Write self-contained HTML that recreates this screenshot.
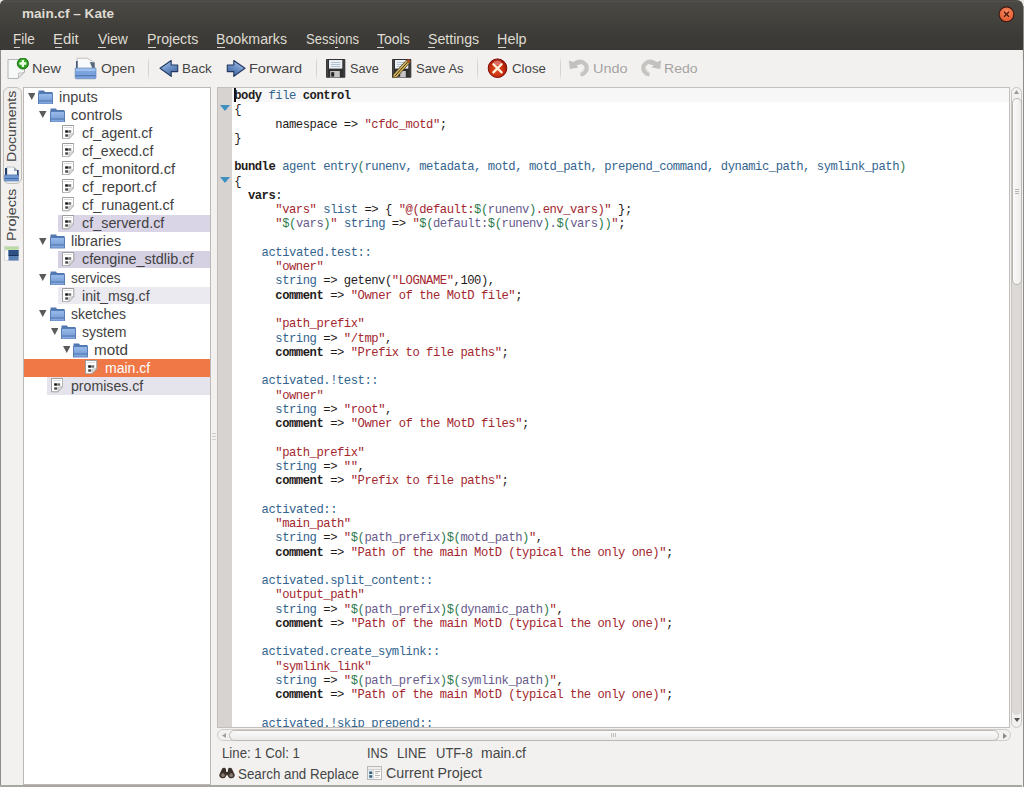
<!DOCTYPE html>
<html><head><meta charset="utf-8"><style>
*{margin:0;padding:0;box-sizing:border-box}
html,body{width:1024px;height:787px;overflow:hidden;background:#f2f1f0;font-family:"Liberation Sans",sans-serif}
.a{position:absolute}
.tx{position:absolute;white-space:nowrap;transform-origin:0 0;line-height:14px}
#code{font-family:"Liberation Mono",monospace;white-space:pre}
.k{font-weight:bold}
.d{color:#33648f}
.s{color:#a3262e}
.o{color:#2d7a4c}
.f{color:#675a8c}
</style></head><body>
<div class="a" style="left:0;top:0;width:1024px;height:60px;background:#e9e6df"></div>
<div class="a" style="left:0;top:0;width:1023px;height:50px;background:linear-gradient(#4a4945 0px,#45443f 14px,#3c3b37 36px,#3a3935 50px);border-radius:5px 6px 0 0"></div>
<div class="a" style="left:3px;top:1px;width:1016px;height:1px;background:#52514c"></div>
<div class="a" style="left:1023px;top:6px;width:1px;height:781px;background:#8f8d8a"></div>
<div class="a" style="left:0;top:50px;width:1022px;height:37px;background:#f2f1f0"></div>
<div class="a" style="left:0;top:50px;width:1px;height:737px;background:#8e8c88"></div>
<div class="a" style="left:147.5px;top:56px;width:1px;height:25px;background:linear-gradient(rgba(0,0,0,0),#d6d3cf 30%,#d6d3cf 70%,rgba(0,0,0,0))"></div>
<div class="a" style="left:315.5px;top:56px;width:1px;height:25px;background:linear-gradient(rgba(0,0,0,0),#d6d3cf 30%,#d6d3cf 70%,rgba(0,0,0,0))"></div>
<div class="a" style="left:477px;top:56px;width:1px;height:25px;background:linear-gradient(rgba(0,0,0,0),#d6d3cf 30%,#d6d3cf 70%,rgba(0,0,0,0))"></div>
<div class="a" style="left:559.5px;top:56px;width:1px;height:25px;background:linear-gradient(rgba(0,0,0,0),#d6d3cf 30%,#d6d3cf 70%,rgba(0,0,0,0))"></div>
<svg class="a" style="left:7px;top:58px" width="24" height="22" viewBox="0 0 24 22"><path d="M1 1.5 H17.5 V14 L11 20.5 H1z" fill="#f7f8f8" stroke="#b4b4b4" stroke-width="1"/><path d="M17.5 14 L11 20.5 Q12 16 11.5 15 Q15 15.5 17.5 14z" fill="#e8e8e8" stroke="#b4b4b4" stroke-width="0.8"/><circle cx="15.9" cy="5.5" r="5.6" fill="#2f9a22" stroke="#1c6e14" stroke-width="0.9"/><circle cx="15.9" cy="4.5" r="3.5" fill="#55c040" opacity="0.5"/><path d="M15.9 2 V9 M12.4 5.5 H19.4" stroke="#e8ffe0" stroke-width="2.3"/></svg>
<svg class="a" style="left:74px;top:57px" width="24" height="23" viewBox="0 0 24 23"><path d="M3.2 1.2 H13 L20.4 5.4 V12 H3.2z" fill="#f8f9fa" stroke="#b3b3b3" stroke-width="0.8"/><path d="M15.8 5 L20.6 5.4 V11.5 L18.5 11.5z" fill="#56657d"/><rect x="2.2" y="4" width="1.3" height="7.5" fill="#1d3560"/><path d="M1.2 11 H22 V20.6 Q22 21.8 20.8 21.8 H2.4 Q1.2 21.8 1.2 20.6z" fill="#7aa2dc" stroke="#5a7cb0" stroke-width="0.6"/><rect x="1.8" y="11.5" width="19.6" height="2.6" fill="#a0c0ee"/><rect x="1.5" y="18.2" width="20.2" height="1" fill="#4a70a8"/></svg>
<svg class="a" style="left:159px;top:59px" width="20" height="19" viewBox="0 0 20 19"><defs><linearGradient id="ag" x1="0.2" y1="0" x2="0.8" y2="1"><stop offset="0" stop-color="#b4cdec"/><stop offset="0.45" stop-color="#6f95cb"/><stop offset="1" stop-color="#3d5f95"/></linearGradient></defs><path d="M1 9.3 L12.2 1.5 V6 H18.7 V12.6 H12.2 V17.4z" fill="url(#ag)" stroke="#22385e" stroke-width="1.1" stroke-linejoin="round"/></svg>
<svg class="a" style="left:226px;top:59px;transform:scaleX(-1)" width="20" height="19" viewBox="0 0 20 19"><defs><linearGradient id="ag2" x1="0.2" y1="0" x2="0.8" y2="1"><stop offset="0" stop-color="#b4cdec"/><stop offset="0.45" stop-color="#6f95cb"/><stop offset="1" stop-color="#3d5f95"/></linearGradient></defs><path d="M1 9.3 L12.2 1.5 V6 H18.7 V12.6 H12.2 V17.4z" fill="url(#ag2)" stroke="#22385e" stroke-width="1.1" stroke-linejoin="round"/></svg>
<svg class="a" style="left:326px;top:59px" width="19.5" height="19" viewBox="0 0 19.5 19"><rect x="0" y="0" width="19.3" height="18.8" rx="0.8" fill="#303030"/><rect x="0.6" y="0.6" width="1.2" height="17.6" fill="#4c4c4c"/><rect x="17.4" y="0.6" width="1.2" height="17.6" fill="#454545"/><rect x="3" y="1" width="13.3" height="8.6" fill="#eaeff5"/><rect x="5" y="3.1" width="9.3" height="0.8" fill="#a9b5c4"/><rect x="5" y="5.1" width="9.3" height="0.8" fill="#a9b5c4"/><rect x="5" y="7.1" width="9.3" height="0.8" fill="#a9b5c4"/><rect x="4.2" y="12" width="9.6" height="6.3" fill="#c4c4c4"/><rect x="5.2" y="13.2" width="3" height="4.4" fill="#242424"/></svg>
<svg class="a" style="left:392px;top:59px" width="20" height="19" viewBox="0 0 20 19"><rect x="0" y="0" width="19.3" height="18.8" rx="0.8" fill="#303030"/><rect x="0.6" y="0.6" width="1.2" height="17.6" fill="#4c4c4c"/><rect x="17.4" y="0.6" width="1.2" height="17.6" fill="#454545"/><rect x="3" y="1" width="13.3" height="8.6" fill="#eaeff5"/><rect x="5" y="3.1" width="9.3" height="0.8" fill="#a9b5c4"/><rect x="5" y="5.1" width="9.3" height="0.8" fill="#a9b5c4"/><rect x="5" y="7.1" width="9.3" height="0.8" fill="#a9b5c4"/><rect x="4.2" y="12" width="9.6" height="6.3" fill="#c4c4c4"/><rect x="5.2" y="13.2" width="3" height="4.4" fill="#242424"/><path d="M1.2 18.8 L0.9 16 L14.4 1.2 L17.6 4 L4.1 18.9z" fill="#d2b866" stroke="#3a2808" stroke-width="0.7"/><path d="M2.6 17.4 L16 2.6" stroke="#4a3208" stroke-width="1"/><path d="M14.4 1.2 L17.6 4 L18.6 2.9 Q18.8 0.8 16.6 0.2z" fill="#b04e28"/></svg>
<svg class="a" style="left:487px;top:58px" width="21" height="21" viewBox="0 0 21 21"><defs><radialGradient id="rg" cx="0.45" cy="0.6" r="0.6"><stop offset="0" stop-color="#e0501c"/><stop offset="0.6" stop-color="#c8300f"/><stop offset="1" stop-color="#9a1408"/></radialGradient></defs><circle cx="10.5" cy="10.2" r="9.3" fill="url(#rg)" stroke="#7e0e06" stroke-width="1"/><ellipse cx="10.5" cy="5" rx="4" ry="2.5" fill="#f0a0a0" opacity="0.55"/><path d="M6.4 6.2 L14.6 14.4 M14.6 6.2 L6.4 14.4" stroke="#fff5dc" stroke-width="2.3" stroke-linecap="round"/></svg>
<svg class="a" style="left:568px;top:57px" width="22" height="20" viewBox="0 0 22 20"><path d="M7.5 6.2 Q11 3.5 15 5.5 Q19.5 8 18.5 12.5 Q17.5 16.5 12.5 17.5" stroke="#c6c4c1" stroke-width="4.2" fill="none"/><path d="M0.8 3.5 L1.8 12 L10.5 10.5 L8.5 8.5 Q10 7.5 12 8 L11 3.5 Q8 3 5.5 5z" fill="#c3c1be"/><path d="M12.5 15.5 Q15.5 14 15.5 11.5" stroke="#e4e3e1" stroke-width="1.2" fill="none"/></svg>
<svg class="a" style="left:640px;top:57px;transform:scaleX(-1)" width="22" height="20" viewBox="0 0 22 20"><path d="M7.5 6.2 Q11 3.5 15 5.5 Q19.5 8 18.5 12.5 Q17.5 16.5 12.5 17.5" stroke="#c6c4c1" stroke-width="4.2" fill="none"/><path d="M0.8 3.5 L1.8 12 L10.5 10.5 L8.5 8.5 Q10 7.5 12 8 L11 3.5 Q8 3 5.5 5z" fill="#c3c1be"/><path d="M12.5 15.5 Q15.5 14 15.5 11.5" stroke="#e4e3e1" stroke-width="1.2" fill="none"/></svg>
<div class="a" style="left:2.5px;top:87px;width:19.5px;height:97px;border:1px solid #c3c0bc;border-radius:6px;background:#f0efee"></div>
<div class="tx" style="left:5.3px;top:162.4px;font-size:13.3px;line-height:14px;color:#454545;transform-origin:0 0;transform:rotate(-90deg) scaleX(1.06)">Documents</div>
<div class="tx" style="left:5.3px;top:241.4px;font-size:13.3px;line-height:14px;color:#454545;transform-origin:0 0;transform:rotate(-90deg) scaleX(1.085)">Projects</div>
<svg class="a" style="left:4px;top:166px" width="15" height="15.5" viewBox="0 0 15 15.5"><path d="M3 1 H10 L14 5 V9 H3z" fill="#f4f8fb" stroke="#a9b0b8" stroke-width="0.7"/><path d="M10 1 V5 H14" fill="#9aa6b2" /><rect x="1" y="2" width="2" height="8" fill="#24406a"/><rect x="13" y="4" width="1.6" height="6" fill="#24406a"/><path d="M0.5 9 H14.5 V15 H0.5z" fill="#6f9ad3" stroke="#4a72a8" stroke-width="0.6"/><rect x="1" y="12" width="13" height="0.9" fill="#3d64a0"/></svg>
<svg class="a" style="left:4px;top:245.5px" width="15" height="15" viewBox="0 0 15 15"><rect x="0.5" y="0.5" width="14" height="14" fill="#f8f8f8" stroke="#c9c9c9" stroke-width="0.6"/><rect x="0.8" y="0.8" width="13.4" height="3" fill="#b8dba0"/><rect x="4.5" y="4" width="10" height="10.5" fill="#5b80b4"/><rect x="4.5" y="4" width="10" height="5" fill="#2d4f82"/><rect x="4.5" y="9" width="10" height="1" fill="#16325a"/></svg>
<div class="a" style="left:23px;top:87px;width:188px;height:698px;background:#fff;border:1px solid #bcb9b5"></div>
<div class="a" style="left:57.5px;top:214.50px;width:152.5px;height:17.3px;background:#d9d5e6"></div>
<div class="a" style="left:58px;top:250.70px;width:152px;height:17.3px;background:#d5d1e3"></div>
<div class="a" style="left:58px;top:286.90px;width:152px;height:17.3px;background:#eceaf1"></div>
<div class="a" style="left:24px;top:359.30px;width:186px;height:17.6px;background:#f07746"></div>
<div class="a" style="left:46.5px;top:377.40px;width:163.5px;height:17.3px;background:#e5e3ec"></div>
<svg class="a" style="left:27.7px;top:92.8px" width="7.5" height="7" viewBox="0 0 7.5 7"><path d="M0 0 H7.5 L3.75 7z" fill="#5b5b5b"/></svg>
<svg class="a" style="left:38px;top:89.6px" width="15" height="14.5" viewBox="0 0 15 14.5"><defs><linearGradient id="fg" x1="0" y1="0" x2="0" y2="1"><stop offset="0" stop-color="#9cbdec"/><stop offset="1" stop-color="#6a93cf"/></linearGradient></defs><path d="M0.5 0.6 H6 L7 2 H14.5 V14 H0.5z" fill="#5077b0"/><rect x="0.5" y="3.6" width="14" height="10.4" fill="url(#fg)" stroke="#5279b2" stroke-width="0.9"/><rect x="1" y="10.6" width="13" height="1.1" fill="#4d72aa"/><rect x="1" y="11.7" width="13" height="1.8" fill="#85a9de"/></svg>
<svg class="a" style="left:39.3px;top:110.9px" width="7.5" height="7" viewBox="0 0 7.5 7"><path d="M0 0 H7.5 L3.75 7z" fill="#5b5b5b"/></svg>
<svg class="a" style="left:49.6px;top:107.7px" width="15" height="14.5" viewBox="0 0 15 14.5"><defs><linearGradient id="fg" x1="0" y1="0" x2="0" y2="1"><stop offset="0" stop-color="#9cbdec"/><stop offset="1" stop-color="#6a93cf"/></linearGradient></defs><path d="M0.5 0.6 H6 L7 2 H14.5 V14 H0.5z" fill="#5077b0"/><rect x="0.5" y="3.6" width="14" height="10.4" fill="url(#fg)" stroke="#5279b2" stroke-width="0.9"/><rect x="1" y="10.6" width="13" height="1.1" fill="#4d72aa"/><rect x="1" y="11.7" width="13" height="1.8" fill="#85a9de"/></svg>
<svg class="a" style="left:61.9px;top:124.9px" width="12.5" height="14.3" viewBox="0 0 12.5 14.3"><path d="M0.5 0.5 H11.8 V8.5 L6.8 13.8 H0.5z" fill="#fff" stroke="#9c9c9c" stroke-width="1"/><path d="M11.8 8.5 L6.8 13.8 L7.5 9.2z" fill="#e4e4e4" stroke="#a5a5a5" stroke-width="0.6"/><rect x="2" y="2" width="8" height="0.7" fill="#cdcdcd"/><rect x="3.2" y="5.3" width="2.7" height="2.4" fill="#111"/><rect x="6.2" y="5.3" width="3" height="2.4" fill="#6a6a6a"/><rect x="3.2" y="9.3" width="3" height="2.4" fill="#4a4a4a"/></svg>
<svg class="a" style="left:61.9px;top:143px" width="12.5" height="14.3" viewBox="0 0 12.5 14.3"><path d="M0.5 0.5 H11.8 V8.5 L6.8 13.8 H0.5z" fill="#fff" stroke="#9c9c9c" stroke-width="1"/><path d="M11.8 8.5 L6.8 13.8 L7.5 9.2z" fill="#e4e4e4" stroke="#a5a5a5" stroke-width="0.6"/><rect x="2" y="2" width="8" height="0.7" fill="#cdcdcd"/><rect x="3.2" y="5.3" width="2.7" height="2.4" fill="#111"/><rect x="6.2" y="5.3" width="3" height="2.4" fill="#6a6a6a"/><rect x="3.2" y="9.3" width="3" height="2.4" fill="#4a4a4a"/></svg>
<svg class="a" style="left:61.9px;top:161.1px" width="12.5" height="14.3" viewBox="0 0 12.5 14.3"><path d="M0.5 0.5 H11.8 V8.5 L6.8 13.8 H0.5z" fill="#fff" stroke="#9c9c9c" stroke-width="1"/><path d="M11.8 8.5 L6.8 13.8 L7.5 9.2z" fill="#e4e4e4" stroke="#a5a5a5" stroke-width="0.6"/><rect x="2" y="2" width="8" height="0.7" fill="#cdcdcd"/><rect x="3.2" y="5.3" width="2.7" height="2.4" fill="#111"/><rect x="6.2" y="5.3" width="3" height="2.4" fill="#6a6a6a"/><rect x="3.2" y="9.3" width="3" height="2.4" fill="#4a4a4a"/></svg>
<svg class="a" style="left:61.9px;top:179.2px" width="12.5" height="14.3" viewBox="0 0 12.5 14.3"><path d="M0.5 0.5 H11.8 V8.5 L6.8 13.8 H0.5z" fill="#fff" stroke="#9c9c9c" stroke-width="1"/><path d="M11.8 8.5 L6.8 13.8 L7.5 9.2z" fill="#e4e4e4" stroke="#a5a5a5" stroke-width="0.6"/><rect x="2" y="2" width="8" height="0.7" fill="#cdcdcd"/><rect x="3.2" y="5.3" width="2.7" height="2.4" fill="#111"/><rect x="6.2" y="5.3" width="3" height="2.4" fill="#6a6a6a"/><rect x="3.2" y="9.3" width="3" height="2.4" fill="#4a4a4a"/></svg>
<svg class="a" style="left:61.9px;top:197.3px" width="12.5" height="14.3" viewBox="0 0 12.5 14.3"><path d="M0.5 0.5 H11.8 V8.5 L6.8 13.8 H0.5z" fill="#fff" stroke="#9c9c9c" stroke-width="1"/><path d="M11.8 8.5 L6.8 13.8 L7.5 9.2z" fill="#e4e4e4" stroke="#a5a5a5" stroke-width="0.6"/><rect x="2" y="2" width="8" height="0.7" fill="#cdcdcd"/><rect x="3.2" y="5.3" width="2.7" height="2.4" fill="#111"/><rect x="6.2" y="5.3" width="3" height="2.4" fill="#6a6a6a"/><rect x="3.2" y="9.3" width="3" height="2.4" fill="#4a4a4a"/></svg>
<svg class="a" style="left:61.9px;top:215.4px" width="12.5" height="14.3" viewBox="0 0 12.5 14.3"><path d="M0.5 0.5 H11.8 V8.5 L6.8 13.8 H0.5z" fill="#fff" stroke="#9c9c9c" stroke-width="1"/><path d="M11.8 8.5 L6.8 13.8 L7.5 9.2z" fill="#e4e4e4" stroke="#a5a5a5" stroke-width="0.6"/><rect x="2" y="2" width="8" height="0.7" fill="#cdcdcd"/><rect x="3.2" y="5.3" width="2.7" height="2.4" fill="#111"/><rect x="6.2" y="5.3" width="3" height="2.4" fill="#6a6a6a"/><rect x="3.2" y="9.3" width="3" height="2.4" fill="#4a4a4a"/></svg>
<svg class="a" style="left:39.3px;top:237.6px" width="7.5" height="7" viewBox="0 0 7.5 7"><path d="M0 0 H7.5 L3.75 7z" fill="#5b5b5b"/></svg>
<svg class="a" style="left:49.6px;top:234.4px" width="15" height="14.5" viewBox="0 0 15 14.5"><defs><linearGradient id="fg" x1="0" y1="0" x2="0" y2="1"><stop offset="0" stop-color="#9cbdec"/><stop offset="1" stop-color="#6a93cf"/></linearGradient></defs><path d="M0.5 0.6 H6 L7 2 H14.5 V14 H0.5z" fill="#5077b0"/><rect x="0.5" y="3.6" width="14" height="10.4" fill="url(#fg)" stroke="#5279b2" stroke-width="0.9"/><rect x="1" y="10.6" width="13" height="1.1" fill="#4d72aa"/><rect x="1" y="11.7" width="13" height="1.8" fill="#85a9de"/></svg>
<svg class="a" style="left:62.4px;top:251.6px" width="12.5" height="14.3" viewBox="0 0 12.5 14.3"><path d="M0.5 0.5 H11.8 V8.5 L6.8 13.8 H0.5z" fill="#fff" stroke="#9c9c9c" stroke-width="1"/><path d="M11.8 8.5 L6.8 13.8 L7.5 9.2z" fill="#e4e4e4" stroke="#a5a5a5" stroke-width="0.6"/><rect x="2" y="2" width="8" height="0.7" fill="#cdcdcd"/><rect x="3.2" y="5.3" width="2.7" height="2.4" fill="#111"/><rect x="6.2" y="5.3" width="3" height="2.4" fill="#6a6a6a"/><rect x="3.2" y="9.3" width="3" height="2.4" fill="#4a4a4a"/></svg>
<svg class="a" style="left:39.3px;top:273.8px" width="7.5" height="7" viewBox="0 0 7.5 7"><path d="M0 0 H7.5 L3.75 7z" fill="#5b5b5b"/></svg>
<svg class="a" style="left:49.6px;top:270.6px" width="15" height="14.5" viewBox="0 0 15 14.5"><defs><linearGradient id="fg" x1="0" y1="0" x2="0" y2="1"><stop offset="0" stop-color="#9cbdec"/><stop offset="1" stop-color="#6a93cf"/></linearGradient></defs><path d="M0.5 0.6 H6 L7 2 H14.5 V14 H0.5z" fill="#5077b0"/><rect x="0.5" y="3.6" width="14" height="10.4" fill="url(#fg)" stroke="#5279b2" stroke-width="0.9"/><rect x="1" y="10.6" width="13" height="1.1" fill="#4d72aa"/><rect x="1" y="11.7" width="13" height="1.8" fill="#85a9de"/></svg>
<svg class="a" style="left:62.4px;top:287.8px" width="12.5" height="14.3" viewBox="0 0 12.5 14.3"><path d="M0.5 0.5 H11.8 V8.5 L6.8 13.8 H0.5z" fill="#fff" stroke="#9c9c9c" stroke-width="1"/><path d="M11.8 8.5 L6.8 13.8 L7.5 9.2z" fill="#e4e4e4" stroke="#a5a5a5" stroke-width="0.6"/><rect x="2" y="2" width="8" height="0.7" fill="#cdcdcd"/><rect x="3.2" y="5.3" width="2.7" height="2.4" fill="#111"/><rect x="6.2" y="5.3" width="3" height="2.4" fill="#6a6a6a"/><rect x="3.2" y="9.3" width="3" height="2.4" fill="#4a4a4a"/></svg>
<svg class="a" style="left:39.3px;top:310px" width="7.5" height="7" viewBox="0 0 7.5 7"><path d="M0 0 H7.5 L3.75 7z" fill="#5b5b5b"/></svg>
<svg class="a" style="left:49.6px;top:306.8px" width="15" height="14.5" viewBox="0 0 15 14.5"><defs><linearGradient id="fg" x1="0" y1="0" x2="0" y2="1"><stop offset="0" stop-color="#9cbdec"/><stop offset="1" stop-color="#6a93cf"/></linearGradient></defs><path d="M0.5 0.6 H6 L7 2 H14.5 V14 H0.5z" fill="#5077b0"/><rect x="0.5" y="3.6" width="14" height="10.4" fill="url(#fg)" stroke="#5279b2" stroke-width="0.9"/><rect x="1" y="10.6" width="13" height="1.1" fill="#4d72aa"/><rect x="1" y="11.7" width="13" height="1.8" fill="#85a9de"/></svg>
<svg class="a" style="left:50.9px;top:328.1px" width="7.5" height="7" viewBox="0 0 7.5 7"><path d="M0 0 H7.5 L3.75 7z" fill="#5b5b5b"/></svg>
<svg class="a" style="left:61.2px;top:324.9px" width="15" height="14.5" viewBox="0 0 15 14.5"><defs><linearGradient id="fg" x1="0" y1="0" x2="0" y2="1"><stop offset="0" stop-color="#9cbdec"/><stop offset="1" stop-color="#6a93cf"/></linearGradient></defs><path d="M0.5 0.6 H6 L7 2 H14.5 V14 H0.5z" fill="#5077b0"/><rect x="0.5" y="3.6" width="14" height="10.4" fill="url(#fg)" stroke="#5279b2" stroke-width="0.9"/><rect x="1" y="10.6" width="13" height="1.1" fill="#4d72aa"/><rect x="1" y="11.7" width="13" height="1.8" fill="#85a9de"/></svg>
<svg class="a" style="left:62.5px;top:346.2px" width="7.5" height="7" viewBox="0 0 7.5 7"><path d="M0 0 H7.5 L3.75 7z" fill="#5b5b5b"/></svg>
<svg class="a" style="left:72.8px;top:343px" width="15" height="14.5" viewBox="0 0 15 14.5"><defs><linearGradient id="fg" x1="0" y1="0" x2="0" y2="1"><stop offset="0" stop-color="#9cbdec"/><stop offset="1" stop-color="#6a93cf"/></linearGradient></defs><path d="M0.5 0.6 H6 L7 2 H14.5 V14 H0.5z" fill="#5077b0"/><rect x="0.5" y="3.6" width="14" height="10.4" fill="url(#fg)" stroke="#5279b2" stroke-width="0.9"/><rect x="1" y="10.6" width="13" height="1.1" fill="#4d72aa"/><rect x="1" y="11.7" width="13" height="1.8" fill="#85a9de"/></svg>
<svg class="a" style="left:85.4px;top:360.2px" width="12.5" height="14.3" viewBox="0 0 12.5 14.3"><path d="M0.5 0.5 H11.8 V8.5 L6.8 13.8 H0.5z" fill="#fff" stroke="#9c9c9c" stroke-width="1"/><path d="M11.8 8.5 L6.8 13.8 L7.5 9.2z" fill="#e4e4e4" stroke="#a5a5a5" stroke-width="0.6"/><rect x="2" y="2" width="8" height="0.7" fill="#cdcdcd"/><rect x="3.2" y="5.3" width="2.7" height="2.4" fill="#111"/><rect x="6.2" y="5.3" width="3" height="2.4" fill="#6a6a6a"/><rect x="3.2" y="9.3" width="3" height="2.4" fill="#4a4a4a"/></svg>
<svg class="a" style="left:50.9px;top:378.3px" width="12.5" height="14.3" viewBox="0 0 12.5 14.3"><path d="M0.5 0.5 H11.8 V8.5 L6.8 13.8 H0.5z" fill="#fff" stroke="#9c9c9c" stroke-width="1"/><path d="M11.8 8.5 L6.8 13.8 L7.5 9.2z" fill="#e4e4e4" stroke="#a5a5a5" stroke-width="0.6"/><rect x="2" y="2" width="8" height="0.7" fill="#cdcdcd"/><rect x="3.2" y="5.3" width="2.7" height="2.4" fill="#111"/><rect x="6.2" y="5.3" width="3" height="2.4" fill="#6a6a6a"/><rect x="3.2" y="9.3" width="3" height="2.4" fill="#4a4a4a"/></svg>
<div class="a" style="left:211px;top:87px;width:6px;height:698px;background:#f2f1f0"></div>
<div class="a" style="left:212px;top:433px;width:4px;height:1px;background:#d2cfcb"></div>
<div class="a" style="left:212px;top:436px;width:4px;height:1px;background:#d2cfcb"></div>
<div class="a" style="left:212px;top:439px;width:4px;height:1px;background:#d2cfcb"></div>
<div class="a" style="left:217px;top:87px;width:793px;height:641px;background:#fff;border:1px solid #c3c0bc"></div>
<div class="a" style="left:218px;top:88px;width:14px;height:639px;background:#d6d3d0"></div>
<div class="a" style="left:232px;top:88px;width:777px;height:13.5px;background:#f7f7f7"></div>
<svg class="a" style="left:220px;top:105.2px" width="10" height="7" viewBox="0 0 10 7"><path d="M0 0 H10 L5 6z" fill="#3f8fc0"/></svg>
<svg class="a" style="left:220px;top:176.6px" width="10" height="7" viewBox="0 0 10 7"><path d="M0 0 H10 L5 6z" fill="#3f8fc0"/></svg>
<div class="a" style="left:233.8px;top:87.5px;width:2px;height:14px;background:#111"></div>
<div class="a" style="left:1011px;top:87px;width:11px;height:641px;border:1px solid #c9c6c2;border-radius:5.5px;background:#f2f1f0"></div>
<div class="a" style="left:1012px;top:100px;width:9px;height:615px;border-radius:4.5px;background:#dcd9d6"></div>
<div class="a" style="left:1011.5px;top:98px;width:10px;height:187px;border:1px solid #b9b6b2;border-radius:5px;background:linear-gradient(90deg,#fafafa,#eeedec)"></div>
<svg class="a" style="left:1014px;top:90px" width="5" height="4" viewBox="0 0 5 4"><path d="M0 4 L2.5 0 L5 4z" fill="#9a9a9a"/></svg>
<svg class="a" style="left:1014px;top:718px" width="6" height="4" viewBox="0 0 6 4"><path d="M0 0 L3 4 L6 0z" fill="#555"/></svg>
<div class="a" style="left:1015px;top:189px;width:4px;height:1px;background:#b8b5b1"></div>
<div class="a" style="left:1015px;top:191px;width:4px;height:1px;background:#b8b5b1"></div>
<div class="a" style="left:1015px;top:193px;width:4px;height:1px;background:#b8b5b1"></div>
<div class="a" style="left:217px;top:729px;width:794px;height:12px;border:1px solid #d0cdc9;border-radius:6px;background:#f2f1f0"></div>
<div class="a" style="left:228.5px;top:729.5px;width:770px;height:11px;border:1px solid #bcb9b5;border-radius:5.5px;background:linear-gradient(#fbfbfb,#ebeae9)"></div>
<svg class="a" style="left:222px;top:733px" width="4" height="5" viewBox="0 0 4 5"><path d="M4 0 L0 2.5 L4 5z" fill="#a0a0a0"/></svg>
<svg class="a" style="left:1003px;top:732.5px" width="4" height="6" viewBox="0 0 4 6"><path d="M0 0 L4 3 L0 6z" fill="#8a8a8a"/></svg>
<div class="a" style="left:611px;top:733px;width:1px;height:4px;background:#c2bfbb"></div>
<div class="a" style="left:613px;top:733px;width:1px;height:4px;background:#c2bfbb"></div>
<div class="a" style="left:615px;top:733px;width:1px;height:4px;background:#c2bfbb"></div>
<div class="a" style="left:0;top:785px;width:1022px;height:2px;background:#a9a7a4"></div>
<svg class="a" style="left:219px;top:767px" width="17" height="12" viewBox="0 0 17 12"><path d="M3.2 1.5 Q4 0.6 5.5 0.8 Q6.8 1 7 2.5 V5 Q7.6 4.6 8 4.5 Q8.4 4.6 9 5 V2.5 Q9.2 1 10.5 0.8 Q12 0.6 12.8 1.5 L15.6 7.5 Q16.3 10.6 13 11.3 Q10 11.6 9.2 9.5 L8 7.5 L6.8 9.5 Q6 11.6 3 11.3 Q-0.3 10.6 0.4 7.5z" fill="#3a3029"/><ellipse cx="4" cy="8.2" rx="1.8" ry="1.9" fill="#8a7e74"/><ellipse cx="12.2" cy="8.2" rx="1.8" ry="1.9" fill="#8a7e74"/></svg>
<svg class="a" style="left:367px;top:766px" width="15" height="14" viewBox="0 0 15 14"><rect x="0.5" y="0.5" width="14" height="13" fill="#fdfdfd" stroke="#b4b2ae" stroke-width="0.9"/><rect x="1" y="1" width="13" height="2.6" fill="#efeeec"/><rect x="1" y="3.4" width="13" height="0.6" fill="#bdbbb7"/><rect x="1.2" y="4" width="5" height="9" fill="#dcebf5"/><rect x="6.2" y="4" width="0.6" height="9.2" fill="#c7c5c2"/><rect x="2.2" y="5.5" width="3" height="2.5" fill="#3f5f77"/><rect x="2.2" y="9.2" width="3" height="2.5" fill="#3f5f77"/><rect x="8" y="5.3" width="5" height="0.8" fill="#888"/><rect x="8" y="7.3" width="3" height="0.7" fill="#aaa"/><rect x="8" y="9.2" width="5" height="0.7" fill="#999"/><rect x="8" y="11" width="4" height="0.6" fill="#bbb"/></svg>
<svg class="a" style="left:998px;top:6px" width="17" height="17" viewBox="0 0 17 17"><defs><radialGradient id="cg" cx="0.5" cy="0.35" r="0.7"><stop offset="0" stop-color="#f88a62"/><stop offset="1" stop-color="#e0532a"/></radialGradient></defs><circle cx="8.5" cy="8.3" r="7.4" fill="url(#cg)" stroke="#3a1a10" stroke-width="1.1"/><path d="M6 5.8 L11 10.8 M11 5.8 L6 10.8" stroke="#4a1a0a" stroke-width="1.3"/></svg>
<div class="tx" style="left:21.70px;top:7.80px;font-size:12.5px;line-height:12.5px;font-weight:bold;color:#dfdbd2;transform:scaleX(1.0861)">main.cf – Kate</div>
<div class="tx" style="left:12.53px;top:31.80px;font-size:14px;line-height:14px;font-weight:normal;color:#dfdbd2;transform:scaleX(0.9691)">File</div>
<div class="tx" style="left:53.44px;top:31.80px;font-size:14px;line-height:14px;font-weight:normal;color:#dfdbd2;transform:scaleX(1.0631)">Edit</div>
<div class="tx" style="left:98.20px;top:31.80px;font-size:14px;line-height:14px;font-weight:normal;color:#dfdbd2;transform:scaleX(0.9941)">View</div>
<div class="tx" style="left:147.19px;top:31.80px;font-size:14px;line-height:14px;font-weight:normal;color:#dfdbd2;transform:scaleX(1.0127)">Projects</div>
<div class="tx" style="left:216.29px;top:31.80px;font-size:14px;line-height:14px;font-weight:normal;color:#dfdbd2;transform:scaleX(1.0142)">Bookmarks</div>
<div class="tx" style="left:305.90px;top:31.80px;font-size:14px;line-height:14px;font-weight:normal;color:#dfdbd2;transform:scaleX(0.9312)">Sessions</div>
<div class="tx" style="left:377.30px;top:31.80px;font-size:14px;line-height:14px;font-weight:normal;color:#dfdbd2;transform:scaleX(1.0005)">Tools</div>
<div class="tx" style="left:427.80px;top:31.80px;font-size:14px;line-height:14px;font-weight:normal;color:#dfdbd2;transform:scaleX(1.0121)">Settings</div>
<div class="tx" style="left:496.77px;top:31.80px;font-size:14px;line-height:14px;font-weight:normal;color:#dfdbd2;transform:scaleX(1.0283)">Help</div>
<div class="tx" style="left:31.64px;top:62.20px;font-size:13.6px;line-height:13.6px;font-weight:normal;color:#454545;transform:scaleX(1.0577)">New</div>
<div class="tx" style="left:100.50px;top:62.20px;font-size:13.6px;line-height:13.6px;font-weight:normal;color:#454545;transform:scaleX(1.0247)">Open</div>
<div class="tx" style="left:182.01px;top:62.20px;font-size:13.6px;line-height:13.6px;font-weight:normal;color:#454545;transform:scaleX(0.9856)">Back</div>
<div class="tx" style="left:249.43px;top:62.20px;font-size:13.6px;line-height:13.6px;font-weight:normal;color:#454545;transform:scaleX(1.0664)">Forward</div>
<div class="tx" style="left:350.00px;top:62.20px;font-size:13.6px;line-height:13.6px;font-weight:normal;color:#454545;transform:scaleX(0.9335)">Save</div>
<div class="tx" style="left:416.00px;top:62.20px;font-size:13.6px;line-height:13.6px;font-weight:normal;color:#454545;transform:scaleX(0.9542)">Save As</div>
<div class="tx" style="left:512.00px;top:62.20px;font-size:13.6px;line-height:13.6px;font-weight:normal;color:#454545;transform:scaleX(0.9768)">Close</div>
<div class="tx" style="left:592.93px;top:62.20px;font-size:13.6px;line-height:13.6px;font-weight:normal;color:#a6a4a1;transform:scaleX(1.0667)">Undo</div>
<div class="tx" style="left:663.97px;top:62.20px;font-size:13.6px;line-height:13.6px;font-weight:normal;color:#a6a4a1;transform:scaleX(1.0343)">Redo</div>
<div class="tx" style="left:59.20px;top:90.50px;font-size:13.8px;line-height:13.8px;font-weight:normal;color:#424242;transform:scaleX(1.0510)">inputs</div>
<div class="tx" style="left:70.60px;top:108.60px;font-size:13.8px;line-height:13.8px;font-weight:normal;color:#424242;transform:scaleX(1.0617)">controls</div>
<div class="tx" style="left:81.50px;top:126.70px;font-size:13.8px;line-height:13.8px;font-weight:normal;color:#424242;transform:scaleX(1.0419)">cf_agent.cf</div>
<div class="tx" style="left:81.50px;top:144.80px;font-size:13.8px;line-height:13.8px;font-weight:normal;color:#424242;transform:scaleX(1.0221)">cf_execd.cf</div>
<div class="tx" style="left:81.50px;top:162.90px;font-size:13.8px;line-height:13.8px;font-weight:normal;color:#424242;transform:scaleX(1.0759)">cf_monitord.cf</div>
<div class="tx" style="left:81.50px;top:181.00px;font-size:13.8px;line-height:13.8px;font-weight:normal;color:#424242;transform:scaleX(1.0740)">cf_report.cf</div>
<div class="tx" style="left:81.50px;top:199.10px;font-size:13.8px;line-height:13.8px;font-weight:normal;color:#424242;transform:scaleX(1.0502)">cf_runagent.cf</div>
<div class="tx" style="left:81.50px;top:217.20px;font-size:13.8px;line-height:13.8px;font-weight:normal;color:#424242;transform:scaleX(1.0424)">cf_serverd.cf</div>
<div class="tx" style="left:70.50px;top:235.30px;font-size:13.8px;line-height:13.8px;font-weight:normal;color:#424242;transform:scaleX(1.0392)">libraries</div>
<div class="tx" style="left:82.00px;top:253.40px;font-size:13.8px;line-height:13.8px;font-weight:normal;color:#424242;transform:scaleX(1.0452)">cfengine_stdlib.cf</div>
<div class="tx" style="left:70.50px;top:271.50px;font-size:13.8px;line-height:13.8px;font-weight:normal;color:#424242;transform:scaleX(0.9802)">services</div>
<div class="tx" style="left:82.00px;top:289.60px;font-size:13.8px;line-height:13.8px;font-weight:normal;color:#424242;transform:scaleX(1.0256)">init_msg.cf</div>
<div class="tx" style="left:70.50px;top:307.70px;font-size:13.8px;line-height:13.8px;font-weight:normal;color:#424242;transform:scaleX(1.0101)">sketches</div>
<div class="tx" style="left:82.00px;top:325.80px;font-size:13.8px;line-height:13.8px;font-weight:normal;color:#424242;transform:scaleX(1.0185)">system</div>
<div class="tx" style="left:93.60px;top:343.90px;font-size:13.8px;line-height:13.8px;font-weight:normal;color:#424242;transform:scaleX(1.1034)">motd</div>
<div class="tx" style="left:105.00px;top:362.00px;font-size:13.8px;line-height:13.8px;font-weight:normal;color:#ffffff;transform:scaleX(1.0171)">main.cf</div>
<div class="tx" style="left:70.50px;top:380.10px;font-size:13.8px;line-height:13.8px;font-weight:normal;color:#424242;transform:scaleX(1.0240)">promises.cf</div>
<div class="tx" style="left:221.56px;top:745.60px;font-size:14px;line-height:14px;font-weight:normal;color:#454545;transform:scaleX(0.9436)">Line: 1 Col: 1</div>
<div class="tx" style="left:366.50px;top:745.60px;font-size:14px;line-height:14px;font-weight:normal;color:#454545;transform:scaleX(0.9000)">INS</div>
<div class="tx" style="left:397.36px;top:745.60px;font-size:14px;line-height:14px;font-weight:normal;color:#454545;transform:scaleX(0.9434)">LINE</div>
<div class="tx" style="left:436.37px;top:745.60px;font-size:14px;line-height:14px;font-weight:normal;color:#454545;transform:scaleX(0.9286)">UTF-8</div>
<div class="tx" style="left:480.90px;top:745.60px;font-size:14px;line-height:14px;font-weight:normal;color:#454545;transform:scaleX(0.9970)">main.cf</div>
<div class="tx" style="left:238.00px;top:766.60px;font-size:14px;line-height:14px;font-weight:normal;color:#454545;transform:scaleX(0.9538)">Search and Replace</div>
<div class="tx" style="left:386.00px;top:766.30px;font-size:14px;line-height:14px;font-weight:normal;color:#454545;transform:scaleX(1.0196)">Current Project</div>
<div class="a" style="left:13.5px;top:46.5px;width:6.5px;height:1px;background:#d6d2ca"></div>
<div class="a" style="left:54.5px;top:46.5px;width:7px;height:1px;background:#d6d2ca"></div>
<div class="a" style="left:98.2px;top:46.5px;width:8px;height:1px;background:#d6d2ca"></div>
<div class="a" style="left:148.2px;top:46.5px;width:7.5px;height:1px;background:#d6d2ca"></div>
<div class="a" style="left:217.3px;top:46.5px;width:8px;height:1px;background:#d6d2ca"></div>
<div class="a" style="left:334.5px;top:46.5px;width:3px;height:1px;background:#d6d2ca"></div>
<div class="a" style="left:377.3px;top:46.5px;width:7px;height:1px;background:#d6d2ca"></div>
<div class="a" style="left:427.8px;top:46.5px;width:7px;height:1px;background:#d6d2ca"></div>
<div class="a" style="left:497.8px;top:46.5px;width:8px;height:1px;background:#d6d2ca"></div>
<div class="a" style="left:218px;top:88px;width:791px;height:639px;overflow:hidden"><div id="code" class="a" style="left:16.2px;top:1px;font-size:12.2px;letter-spacing:-0.46px;line-height:14.27px;color:#1f1c1b"><span class="k">body</span> <span class="d">file</span> <span class="k">control</span>
{
      namespace => <span class="s">"cfdc_motd"</span>;
}

<span class="k">bundle</span> <span class="d">agent entry</span><span class="o">(</span><span class="d">runenv, metadata, motd, motd_path, prepend_command, dynamic_path, symlink_path</span><span class="o">)</span>
{
  <span class="k">vars</span>:
      <span class="s">"vars"</span> <span class="d">slist</span> => { <span class="s">"@(default:</span><span class="o">$(</span><span class="f">runenv</span><span class="o">)</span><span class="s">.env_vars)"</span> };
      <span class="s">"</span><span class="o">$(</span><span class="f">vars</span><span class="o">)</span><span class="s">"</span> <span class="d">string</span> => <span class="s">"</span><span class="o">$(</span><span class="f">default:</span><span class="o">$(</span><span class="f">runenv</span><span class="o">)</span><span class="f">.</span><span class="o">$(</span><span class="f">vars</span><span class="o">))</span><span class="s">"</span>;

    <span class="d">activated.test::</span>
      <span class="s">"owner"</span>
      <span class="d">string</span> => getenv(<span class="s">"LOGNAME"</span>,100),
      <span class="k">comment</span> => <span class="s">"Owner of the MotD file"</span>;

      <span class="s">"path_prefix"</span>
      <span class="d">string</span> => <span class="s">"/tmp"</span>,
      <span class="k">comment</span> => <span class="s">"Prefix to file paths"</span>;

    <span class="d">activated.!test::</span>
      <span class="s">"owner"</span>
      <span class="d">string</span> => <span class="s">"root"</span>,
      <span class="k">comment</span> => <span class="s">"Owner of the MotD files"</span>;

      <span class="s">"path_prefix"</span>
      <span class="d">string</span> => <span class="s">""</span>,
      <span class="k">comment</span> => <span class="s">"Prefix to file paths"</span>;

    <span class="d">activated::</span>
      <span class="s">"main_path"</span>
      <span class="d">string</span> => <span class="s">"</span><span class="o">$(</span><span class="f">path_prefix</span><span class="o">)$(</span><span class="f">motd_path</span><span class="o">)</span><span class="s">"</span>,
      <span class="k">comment</span> => <span class="s">"Path of the main MotD (typical the only one)"</span>;

    <span class="d">activated.split_content::</span>
      <span class="s">"output_path"</span>
      <span class="d">string</span> => <span class="s">"</span><span class="o">$(</span><span class="f">path_prefix</span><span class="o">)$(</span><span class="f">dynamic_path</span><span class="o">)</span><span class="s">"</span>,
      <span class="k">comment</span> => <span class="s">"Path of the main MotD (typical the only one)"</span>;

    <span class="d">activated.create_symlink::</span>
      <span class="s">"symlink_link"</span>
      <span class="d">string</span> => <span class="s">"</span><span class="o">$(</span><span class="f">path_prefix</span><span class="o">)$(</span><span class="f">symlink_path</span><span class="o">)</span><span class="s">"</span>,
      <span class="k">comment</span> => <span class="s">"Path of the main MotD (typical the only one)"</span>;

    <span class="d">activated.!skip_prepend::</span></div></div>
</body></html>
